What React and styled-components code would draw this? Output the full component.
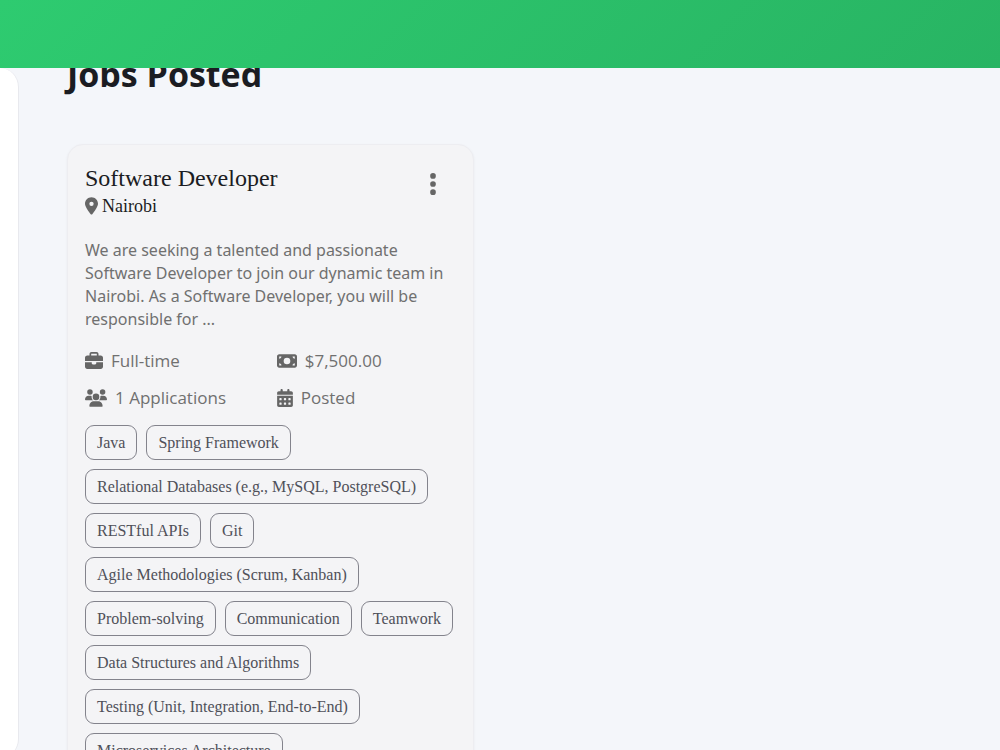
import React from 'react';
import styled, { createGlobalStyle } from 'styled-components';
import {
  FaBriefcase,
  FaCalendarDays,
  FaEllipsisVertical,
  FaLocationDot,
  FaMoneyBill,
  FaUsers,
} from 'react-icons/fa6';

const job = {
  title: 'Software Developer',
  location: 'Nairobi',
  description:
    'We are seeking a talented and passionate Software Developer to join our dynamic team in Nairobi. As a Software Developer, you will be responsible for ...',
  type: 'Full-time',
  salary: '$7,500.00',
  applications: 1,
  status: 'Posted',
  skills: [
    'Java',
    'Spring Framework',
    'Relational Databases (e.g., MySQL, PostgreSQL)',
    'RESTful APIs',
    'Git',
    'Agile Methodologies (Scrum, Kanban)',
    'Problem-solving',
    'Communication',
    'Teamwork',
    'Data Structures and Algorithms',
    'Testing (Unit, Integration, End-to-End)',
    'Microservices Architecture',
  ],
};

const JobCard = ({ job }) => {
  return (
    <Card>
      <CardHeader>
        <div>
          <JobTitle>{job.title}</JobTitle>
          <Location>
            <FaLocationDot />
            <span>{job.location}</span>
          </Location>
        </div>
        <MenuBtn type="button" aria-label="Job options">
          <FaEllipsisVertical />
        </MenuBtn>
      </CardHeader>
      <Description>{job.description}</Description>
      <Details>
        <Detail $iconWidth={18}>
          <FaBriefcase />
          {job.type}
        </Detail>
        <Detail $iconWidth={20}>
          <FaMoneyBill />
          {job.salary}
        </Detail>
        <Detail $iconWidth={22}>
          <FaUsers />
          {job.applications} Applications
        </Detail>
        <Detail $iconWidth={16}>
          <FaCalendarDays />
          {job.status}
        </Detail>
      </Details>
      <Skills>
        {job.skills.map(skill => (
          <Skill key={skill}>{skill}</Skill>
        ))}
      </Skills>
    </Card>
  );
};

const App = () => {
  return (
    <>
      <GlobalStyle />
      <TopBar />
      <Page>
        <Sidebar />
        <Content>
          <Heading>Jobs Posted</Heading>
          <JobGrid>
            <JobCard job={job} />
          </JobGrid>
        </Content>
      </Page>
    </>
  );
};

export default App;

const GlobalStyle = createGlobalStyle`
  * {
    box-sizing: border-box;
  }

  body {
    margin: 0;
    overflow: hidden;
    background-color: #f4f6fa;
    color: #1b1c22;
    font-family: 'Open Sans', 'Noto Sans', sans-serif;
  }
`;

const TopBar = styled.header`
  position: fixed;
  top: 0;
  left: 0;
  right: 0;
  z-index: 10;
  height: 68px;
  background: linear-gradient(135deg, #2ecb70, #28b463);
`;

const Page = styled.div`
  display: flex;
  height: 100vh;
  padding-top: 50px;
`;

const Sidebar = styled.aside`
  flex: none;
  width: 19px;
  height: 690px;
  margin-top: 18px;
  background-color: white;
  border-right: 1px solid #e8e9ee;
  border-radius: 0 20px 20px 0;
`;

const Content = styled.main`
  flex: 1;
  padding: 0 72px 0 48px;
`;

const Heading = styled.h1`
  margin: 0 0 46px;
  font-size: 34px;
  line-height: 48px;
  font-weight: bold;
`;

const JobGrid = styled.div`
  display: grid;
  grid-template-columns: repeat(2, 1fr);
  gap: 48px;
`;

const Card = styled.article`
  padding: 18px 17px;
  background-color: #f4f4f6;
  border: 1px solid #ededf1;
  border-radius: 16px;
  box-shadow: 0 1px 3px rgba(0, 0, 0, 0.05);
`;

const CardHeader = styled.div`
  display: flex;
  justify-content: space-between;
  align-items: flex-start;
  font-family: 'Liberation Serif', serif;
`;

const JobTitle = styled.h2`
  margin: 0;
  font-size: 24px;
  line-height: 30px;
  font-weight: normal;
`;

const Location = styled.div`
  display: flex;
  align-items: center;
  gap: 4px;
  font-size: 18px;
  line-height: 26px;

  svg {
    width: 13px;
    height: 18px;
    color: #666;
  }
`;

const MenuBtn = styled.button`
  display: flex;
  padding: 8px 10px;
  border: 0;
  background: none;
  color: #666;
  font-size: 26px;
  cursor: pointer;
`;

const Description = styled.p`
  margin: 20px 0 0;
  color: #707070;
  font-family: 'Noto Sans', 'Open Sans', sans-serif;
  font-size: 16px;
  line-height: 23px;
`;

const Details = styled.div`
  display: grid;
  grid-template-columns: 1fr 1fr;
  gap: 13px;
  margin: 18px 0 15px;
`;

const Detail = styled.div`
  display: flex;
  align-items: center;
  gap: 8px;
  color: #707070;
  font-size: 17px;
  line-height: 24px;

  svg {
    flex: none;
    width: ${({ $iconWidth }) => $iconWidth}px;
    height: 18px;
    color: #666;
  }
`;

const Skills = styled.ul`
  display: flex;
  flex-wrap: wrap;
  gap: 9px;
  margin: 0;
  padding: 0;
  list-style: none;
`;

const Skill = styled.li`
  padding: 0 11px;
  border: 1px solid #83838c;
  border-radius: 9px;
  color: #4f5059;
  font-family: 'Liberation Serif', serif;
  font-size: 16px;
  line-height: 33px;
`;
